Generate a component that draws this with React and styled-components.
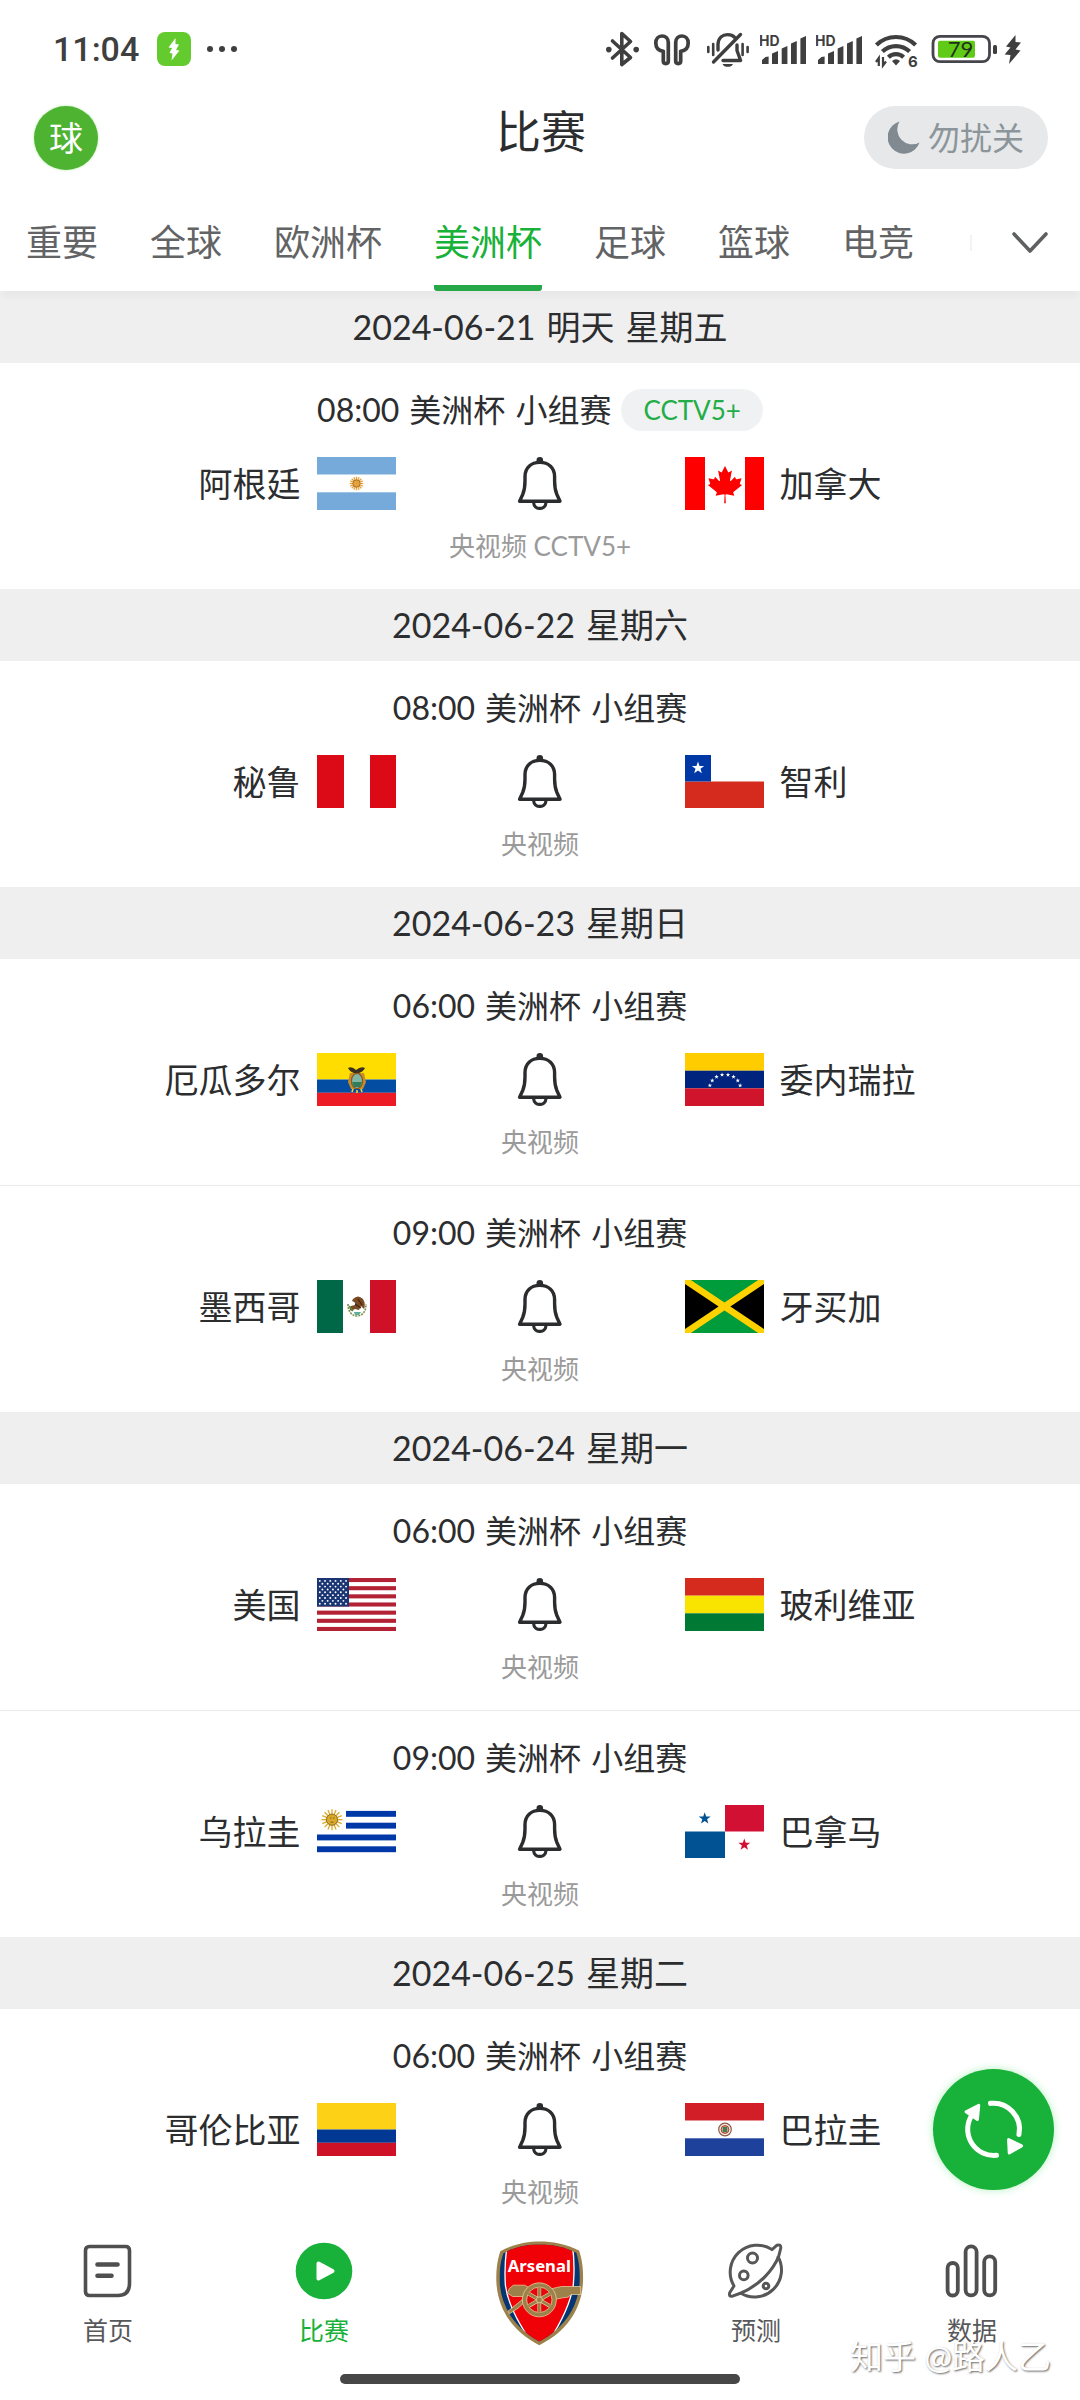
import React, { useState } from "react";
import styled, { createGlobalStyle, css } from "styled-components";

const GREEN = "#18b139";

const days = [
  {
    date: "2024-06-21",
    note: "明天",
    weekday: "星期五",
    matches: [
      { time: "08:00", tag: "CCTV5+", home: "阿根廷", homeFlag: "ar", away: "加拿大", awayFlag: "ca", live: "央视频 CCTV5+" },
    ],
  },
  {
    date: "2024-06-22",
    weekday: "星期六",
    matches: [
      { time: "08:00", home: "秘鲁", homeFlag: "pe", away: "智利", awayFlag: "cl", live: "央视频" },
    ],
  },
  {
    date: "2024-06-23",
    weekday: "星期日",
    matches: [
      { time: "06:00", home: "厄瓜多尔", homeFlag: "ec", away: "委内瑞拉", awayFlag: "ve", live: "央视频" },
      { time: "09:00", home: "墨西哥", homeFlag: "mx", away: "牙买加", awayFlag: "jm", live: "央视频" },
    ],
  },
  {
    date: "2024-06-24",
    weekday: "星期一",
    matches: [
      { time: "06:00", home: "美国", homeFlag: "us", away: "玻利维亚", awayFlag: "bo", live: "央视频" },
      { time: "09:00", home: "乌拉圭", homeFlag: "uy", away: "巴拿马", awayFlag: "pa", live: "央视频" },
    ],
  },
  {
    date: "2024-06-25",
    weekday: "星期二",
    matches: [
      { time: "06:00", home: "哥伦比亚", homeFlag: "co", away: "巴拉圭", awayFlag: "py", live: "央视频" },
    ],
  },
];

const tabs = ["重要", "全球", "欧洲杯", "美洲杯", "足球", "篮球", "电竞"];

const star = (cx, cy, r) =>
  Array.from({ length: 10 }, (_, i) => {
    const a = (Math.PI / 5) * i - Math.PI / 2;
    const d = i % 2 ? r * 0.4 : r;
    return `${cx + d * Math.cos(a)},${cy + d * Math.sin(a)}`;
  }).join(" ");

const Stripes = ({ rows }) => {
  let y = 0;
  return rows.map(([fill, height], i) => {
    const top = y;
    y += height;
    return <rect key={i} y={top} width="79" height={height} fill={fill} />;
  });
};

const Sun = ({ cx, cy, r, rays, fill, stroke }) => (
  <g>
    {Array.from({ length: 16 }, (_, i) => {
      const a = (Math.PI / 8) * i;
      return (
        <line
          key={i}
          x1={cx}
          y1={cy}
          x2={cx + rays * Math.cos(a)}
          y2={cy + rays * Math.sin(a)}
          stroke={fill}
          strokeWidth="1.3"
        />
      );
    })}
    <circle cx={cx} cy={cy} r={r} fill={fill} stroke={stroke} strokeWidth="0.8" />
  </g>
);

const flags = {
  ar: (
    <>
      <Stripes rows={[["#75aadb", 17.7], ["#fff", 17.6], ["#75aadb", 17.7]]} />
      <Sun cx={39.5} cy={26.5} r={3.6} rays={6.8} fill="#e3a33c" stroke="#a5652a" />
    </>
  ),
  ca: (
    <>
      <rect width="79" height="53" fill="#fff" />
      <rect width="20" height="53" fill="#f00" />
      <rect x="60" width="19" height="53" fill="#f00" />
      <path
        transform="translate(40 27.5) scale(.0092)"
        fill="#f00"
        d="m-90 2030 45-863a95 95 0 0 0-111-98l-859 151 116-320a65 65 0 0 0-20-73l-941-762 212-99a65 65 0 0 0 34-79l-186-572 542 115a65 65 0 0 0 73-38l105-247 423 454a65 65 0 0 0 111-57l-204-1052 327 189a65 65 0 0 0 91-27l332-652 332 652a65 65 0 0 0 91 27l327-189-204 1052a65 65 0 0 0 111 57l423-454 105 247a65 65 0 0 0 73 38l542-115-186 572a65 65 0 0 0 34 79l212 99-941 762a65 65 0 0 0-20 73l116 320-859-151a95 95 0 0 0-111 98l45 863z"
      />
    </>
  ),
  pe: (
    <>
      <rect width="79" height="53" fill="#fff" />
      <rect width="27" height="53" fill="#db0a16" />
      <rect x="53" width="26" height="53" fill="#db0a16" />
    </>
  ),
  cl: (
    <>
      <Stripes rows={[["#fff", 26.5], ["#d52b1e", 26.5]]} />
      <rect width="26" height="26.5" fill="#0039a6" />
      <polygon points={star(13, 13, 6.5)} fill="#fff" />
    </>
  ),
  ec: (
    <>
      <Stripes rows={[["#ffdd00", 26.5], ["#034ea2", 13.3], ["#ed1c24", 13.2]]} />
      <path d="M31 15q4-2 8 2q5-4 9-2q-2 4-6 5v3h-5v-3q-4-1-6-5z" fill="#3b2f20" />
      <path d="M33 20l-2 9 3 7h12l3-7-2-9z" fill="#c98b2b" />
      <ellipse cx="40" cy="28" rx="5.6" ry="7.6" fill="#7fb6a4" stroke="#8a5a1c" strokeWidth="1.2" />
      <path d="M35 29h10l-2 5h-6z" fill="#2f7d5a" />
      <path d="M36 36l-1 3M44 36l1 3M40 37v3" stroke="#f3d23a" strokeWidth="1.6" />
    </>
  ),
  ve: (
    <>
      <Stripes rows={[["#ffcc00", 17.7], ["#00247d", 17.6], ["#cf142b", 17.7]]} />
      {[0, 1, 2, 3, 4, 5, 6, 7].map((i) => {
        const a = Math.PI * (1.07 + i * 0.123);
        return (
          <polygon
            key={i}
            points={star(40 + 15.5 * Math.cos(a), 35.5 + 14 * Math.sin(a), 2.3)}
            fill="#fff"
          />
        );
      })}
    </>
  ),
  mx: (
    <>
      <rect width="79" height="53" fill="#fff" />
      <rect width="26" height="53" fill="#006847" />
      <rect x="53" width="26" height="53" fill="#ce1126" />
      <path d="M31 24q0 11 9 12q9-1 9-12" fill="none" stroke="#7d8f4d" strokeWidth="1.6" strokeDasharray="2 1" />
      <path d="M36 19q5-5 10 0q3 5 1 10l-3-3-2 4-4-1-4 2q-3-3 0-5l4-1q1-3-3-4z" fill="#7a4a25" />
      <path d="M41 19l4 6M38 24l6 4" stroke="#3d2613" strokeWidth="1.2" />
      <path d="M37 32h7l-2 3h-4z" fill="#5fae9c" />
      <path d="M32 26l4 5" stroke="#4f8a3c" strokeWidth="1.3" />
    </>
  ),
  jm: (
    <>
      <rect width="79" height="53" fill="#009b3a" />
      <path d="M0 0L39.5 26.5L0 53zM79 0L39.5 26.5L79 53z" fill="#000" />
      <path d="M0 0L79 53M79 0L0 53" stroke="#fed100" strokeWidth="6.5" />
    </>
  ),
  us: (
    <>
      <rect width="79" height="53" fill="#fff" />
      {[0, 1, 2, 3, 4, 5, 6].map((i) => (
        <rect key={i} y={(i * 106) / 13} width="79" height={53 / 13} fill="#b22234" />
      ))}
      <rect width="32" height="28.5" fill="#1a3573" />
      {Array.from({ length: 9 }, (_, r) =>
        Array.from({ length: r % 2 ? 5 : 6 }, (_, c) => (
          <circle
            key={`${r}-${c}`}
            cx={(r % 2 ? 5.4 : 2.8) + c * 5.25}
            cy={2.9 + r * 2.85}
            r="0.95"
            fill="#fff"
          />
        ))
      )}
    </>
  ),
  bo: <Stripes rows={[["#d52b1e", 17.7], ["#f9e300", 17.6], ["#007934", 17.7]]} />,
  uy: (
    <>
      <rect width="79" height="53" fill="#fff" />
      {[0, 1, 2, 3].map((i) => (
        <rect
          key={i}
          x={i < 2 ? 29 : 0}
          y={5.9 + i * 11.8}
          width={i < 2 ? 50 : 79}
          height="5.9"
          fill="#0038a8"
        />
      ))}
      <Sun cx={15} cy={14.7} r={5.6} rays={10.5} fill="#d9a92b" stroke="#7b5a12" />
      <path d="M13 13h1.5M16 13h1.5M13.5 17.2h3" stroke="#7b5a12" strokeWidth="0.9" />
    </>
  ),
  pa: (
    <>
      <rect width="79" height="53" fill="#fff" />
      <rect x="40" width="39" height="26.5" fill="#d21034" />
      <rect y="26.5" width="40" height="26.5" fill="#005293" />
      <polygon points={star(19.7, 13.5, 6.3)} fill="#005293" />
      <polygon points={star(59.3, 39.7, 6.3)} fill="#d21034" />
    </>
  ),
  co: <Stripes rows={[["#fcd116", 26.5], ["#003893", 13.3], ["#ce1126", 13.2]]} />,
  py: (
    <>
      <Stripes rows={[["#d21e26", 17.7], ["#fff", 17.6], ["#1e419b", 17.7]]} />
      <circle cx="40" cy="26.5" r="6.3" fill="#f4efe6" stroke="#8c5a4a" strokeWidth="1.2" />
      <circle cx="40" cy="26.5" r="3.9" fill="#c9a77a" stroke="#b5382f" strokeWidth="1" />
      <path d="M38 24v5h4v-5z" fill="#3f7f5c" />
    </>
  ),
};

const BluetoothIcon = () => (
  <svg width="36" height="40" viewBox="0 0 36 40">
    <path
      d="M7.5 12L25.5 28.5L16.8 35.5V4.5L25.5 12.5L7.5 29"
      fill="none"
      stroke="#3f3f3f"
      strokeWidth="3.6"
      strokeLinecap="round"
      strokeLinejoin="round"
    />
    <circle cx="3.8" cy="20.6" r="2.8" fill="#3f3f3f" />
    <circle cx="31.2" cy="20.6" r="2.8" fill="#3f3f3f" />
  </svg>
);

const EarbudsIcon = () => (
  <svg width="45" height="40" viewBox="0 0 45 40" fill="none" stroke="#3f3f3f" strokeWidth="3.7" strokeLinejoin="round">
    <path d="M12.3 22.3C7 21.6 4.8 18 4.8 14C4.8 10 7.4 7 11 7C14.6 7 17.3 9.6 17.3 13.5V32C17.3 35.4 12.3 35.4 12.3 32Z" />
    <path d="M29.7 22.3C35 21.6 37.2 18 37.2 14C37.2 10 34.6 7 31 7C27.4 7 24.7 9.6 24.7 13.5V32C24.7 35.4 29.7 35.4 29.7 32Z" />
  </svg>
);

const MutedIcon = () => (
  <svg width="44" height="40" viewBox="0 0 44 40" fill="none" stroke="#3f3f3f" strokeWidth="3.4" strokeLinecap="round" strokeLinejoin="round">
    <path d="M12 21V15C12.5 9 16.5 5.6 21.5 5.6C24.5 5.6 27 6.5 28.6 8.3" />
    <path d="M31 16V21.5L34.6 31.5H17" />
    <path d="M7.5 33L34.5 5.5" />
    <path d="M16.5 35H27C25.5 38.8 18 38.8 16.5 35Z" fill="#3f3f3f" stroke="none" />
    <path d="M2.3 18V23M7.2 15V26M36.6 15V26M41.6 18V23" strokeWidth="2.6" />
  </svg>
);

const SignalIcon = () => (
  <svg width="46" height="40" viewBox="0 0 46 40" fill="#3f3f3f">
    <text x="-1" y="16.6" fontFamily="Inter, sans-serif" fontSize="14" fontWeight="700">
      HD
    </text>
    <path d="M2 35V31L5.5 28L8.6 27.4V35Z" />
    <path d="M12 35V24.5L18 22V35Z" />
    <path d="M21.7 35V19.5L27.4 17V35Z" />
    <path d="M31 35V14.5L36.8 12V35Z" />
    <path d="M40.4 35V9.5L46 7V35Z" />
  </svg>
);

const WifiIcon = () => (
  <svg width="48" height="40" viewBox="0 0 48 40" fill="none" stroke="#3f3f3f" strokeWidth="4.2">
    <path d="M4.4 16A28 28 0 0 1 43.6 16" />
    <path d="M10.4 22.6A19.5 19.5 0 0 1 37.6 22.6" />
    <path d="M16.4 28.2A11 11 0 0 1 31.6 28.2" />
    <path d="M20 32Q24 28.6 28 32L24 36.5Z" fill="#3f3f3f" stroke="none" />
    <path d="M6.8 37V29L4 33M11 28V36.5L14 32.5" strokeWidth="2.2" />
    <text x="36" y="37.5" fill="#3f3f3f" stroke="none" fontFamily="Inter, sans-serif" fontSize="15" fontWeight="700">
      6
    </text>
  </svg>
);

const BatteryIcon = () => (
  <svg width="92" height="40" viewBox="0 0 92 40">
    <rect x="3" y="7.3" width="56.5" height="25.4" rx="7" fill="#fff" stroke="#45454b" strokeWidth="2.8" />
    <rect x="8" y="11.7" width="37" height="17" rx="2" fill="#60cb16" />
    <text x="30.5" y="27.8" textAnchor="middle" fontFamily="Lato, sans-serif" fontSize="22" fill="#22301a">
      79
    </text>
    <rect x="63" y="16" width="4" height="9" rx="1.5" fill="#3f3f3f" />
    <path d="M85.5 6L76 17.5L80.5 18.5L74.6 25.5L80.5 26L79 35L90.5 21.5L85.5 20.5L91 13.6L85.5 13Z" fill="#3f3f3f" />
  </svg>
);

const MoonIcon = () => (
  <svg width="32" height="33" viewBox="0 0 32 33">
    <path d="M11.5 .5A16.4 16.4 0 1 0 31.5 21.5A15 15 0 0 1 11.5 .5Z" fill="#808a90" />
  </svg>
);

const BellIcon = () => (
  <svg width="46" height="53" viewBox="0 0 46 53" fill="none" stroke="#2b2c2e" strokeWidth="3.4" strokeLinejoin="round">
    <circle cx="22.8" cy="3.4" r="3.3" fill="#2b2c2e" stroke="none" />
    <path d="M2.6 44.2L5.7 37.5C7.4 33.5 8 29 8 24V19.5C8 10.8 14 5.4 22.8 5.4C31.6 5.4 37.6 10.8 37.6 19.5V24C37.6 29 38.2 33.5 39.9 37.5L43 44.2Z" />
    <path d="M16.6 45.5C17 53.4 28.6 53.4 29 45.5" strokeWidth="3.2" />
  </svg>
);

const RefreshIcon = () => (
  <svg width="65" height="65" viewBox="108 112 194 194" fill="none" stroke="#fff" strokeLinecap="round" strokeLinejoin="round">
    <path d="M196 131A78 78 0 0 1 281 224" strokeWidth="15" />
    <path d="M214 286A78 78 0 0 1 137 172" strokeWidth="15" />
    <path d="M250 239L289 258L252 279Z" fill="#fff" strokeWidth="9" />
    <path d="M123 156L161 137L157 179Z" fill="#fff" strokeWidth="9" />
  </svg>
);

const HomeIcon = () => (
  <svg width="58" height="58" viewBox="0 0 58 58" fill="none" stroke="#4f4f4f" strokeWidth="3.6" strokeLinecap="round">
    <path d="M10.5 4.5H46.5Q50.5 4.5 50.5 8.5V41Q50.5 53.5 39 53.5H10.5Q6.5 53.5 6.5 49.5V8.5Q6.5 4.5 10.5 4.5Z" />
    <path d="M18.5 22.5H38.5M18.5 33.8H32.5" strokeWidth="4.6" />
  </svg>
);

const PlayIcon = () => (
  <svg width="58" height="58" viewBox="0 0 58 58">
    <circle cx="29" cy="29" r="28.3" fill={GREEN} />
    <path d="M23.5 21.5L37.5 29L23.5 36.5Z" fill="#fff" stroke="#fff" strokeWidth="4" strokeLinejoin="round" />
  </svg>
);

const PlanetIcon = () => (
  <svg width="58" height="58" viewBox="0 0 58 58" fill="none" stroke="#575757" strokeWidth="3" strokeLinejoin="round">
    <path d="M45 7.6A27 27 0 0 0 7 44L2.8 50.5Q1.4 55.5 6.2 53.8L14 51C33 43 46 28 51.6 14.6L53.8 6Q54 2 50 3.2Z" />
    <path d="M50.6 14A27 27 0 0 1 13.4 51" />
    <circle cx="25.5" cy="16" r="5" />
    <circle cx="16.8" cy="33.4" r="4.3" />
    <circle cx="39" cy="44" r="2.8" />
  </svg>
);

const ChartIcon = () => (
  <svg width="58" height="58" viewBox="0 0 58 58" fill="none" stroke="#4f4f4f" strokeWidth="3.8">
    <rect x="4.6" y="21" width="10.2" height="32.5" rx="5" />
    <rect x="22.6" y="4.4" width="11" height="49" rx="5.4" />
    <rect x="41.2" y="14.4" width="11" height="39" rx="5.4" />
  </svg>
);

const Crest = () => (
  <svg width="88" height="105" viewBox="36 30 264 314">
    <defs>
      <clipPath id="crest-field">
        <path d="M58 66C95 47 130 40 167 40C204 40 240 47 277 65C285 90 288 115 287 150C284 225 243 290 166 331C91 290 50 225 47 150C46 115 50 90 58 66Z" />
      </clipPath>
    </defs>
    <path
      d="M49 60C90 38 130 31 167 31C204 31 245 38 285 58C294 85 298 110 297 150C294 232 250 300 166 342C84 300 40 232 37 150C36 110 41 85 49 60Z"
      fill="#9c824a"
    />
    <g clipPath="url(#crest-field)">
      <rect x="36" y="30" width="264" height="314" fill="#063672" />
      <path d="M72 30H263Q274 90 268 160Q258 235 186 344H150Q72 235 64 160Q60 90 72 30Z" fill="#ef0107" stroke="#fff" strokeWidth="4" />
    </g>
    <g fill="#9c824a" stroke="#f1dfb0" strokeWidth="2">
      <path d="M88 162H122L140 172H205L232 166H290V190H262L252 198L236 200L206 206H140L118 196H86L70 186L76 172Z" />
      <path d="M130 204L104 230L76 248L72 240L126 196Z" />
      <circle cx="166" cy="206" r="51" />
    </g>
    <circle cx="166" cy="206" r="38" fill="#e5060b" stroke="#f1dfb0" strokeWidth="2" />
    <g stroke="#f1dfb0" strokeWidth="11">
      <path d="M166 170V242M135 188L197 224M135 224L197 188" />
    </g>
    <g stroke="#9c824a" strokeWidth="8">
      <path d="M166 168V244M133 187L199 225M133 225L199 187" />
    </g>
    <circle cx="166" cy="206" r="9" fill="#9c824a" stroke="#f1dfb0" strokeWidth="2" />
    <text
      x="166"
      y="122"
      textAnchor="middle"
      fill="#fff"
      fontFamily="Noto Sans, sans-serif"
      fontSize="50"
      fontWeight="700"
    >
      Arsenal
    </text>
  </svg>
);

const navItems = [
  { label: "首页", icon: <HomeIcon /> },
  { label: "比赛", icon: <PlayIcon />, active: true },
  { icon: <Crest />, name: "Arsenal" },
  { label: "预测", icon: <PlanetIcon /> },
  { label: "数据", icon: <ChartIcon /> },
];

const Match = ({ match }) => (
  <MatchItem>
    <MatchTitle>
      <time>{match.time}</time>
      <span>美洲杯</span>
      <span>小组赛</span>
      {match.tag && <Tag>{match.tag}</Tag>}
    </MatchTitle>
    <Teams>
      <Team $home>
        <Flag viewBox="0 0 79 53" aria-hidden="true">{flags[match.homeFlag]}</Flag>
        <span>{match.home}</span>
      </Team>
      <BellButton type="button" aria-label="提醒">
        <BellIcon />
      </BellButton>
      <Team>
        <Flag viewBox="0 0 79 53" aria-hidden="true">{flags[match.awayFlag]}</Flag>
        <span>{match.away}</span>
      </Team>
    </Teams>
    <Live>{match.live}</Live>
  </MatchItem>
);

const App = () => {
  const [current, setCurrent] = useState("美洲杯");

  return (
    <Page>
      <GlobalStyle />
      <StatusBar>
        <Clock>11:04</Clock>
        <AppBadge>
          <svg width="34" height="34" viewBox="0 0 34 34">
            <path d="M18.5 6L11.5 15.5L15 16L12.5 21L15.5 21.5L14.5 28.5L22.5 18.5L19 18L22 12.5L18.5 12Z" fill="#fff" />
          </svg>
        </AppBadge>
        <svg width="32" height="8" viewBox="0 0 32 8" fill="#3f3f3f">
          <circle cx="4" cy="4" r="3" />
          <circle cx="16" cy="4" r="3" />
          <circle cx="28" cy="4" r="3" />
        </svg>
        <StatusIcons>
          <BluetoothIcon />
          <EarbudsIcon />
          <MutedIcon />
          <SignalIcon />
          <SignalIcon />
          <WifiIcon />
          <BatteryIcon />
        </StatusIcons>
      </StatusBar>

      <Header>
        <Avatar type="button">球</Avatar>
        <Title>比赛</Title>
        <Quiet type="button">
          <MoonIcon />
          勿扰关
        </Quiet>
      </Header>

      <TabBar>
        <TabList>
          {tabs.map((tab) => (
            <Tab
              key={tab}
              type="button"
              $active={tab === current}
              onClick={() => setCurrent(tab)}
            >
              <span>{tab}</span>
            </Tab>
          ))}
        </TabList>
        <More type="button" aria-label="更多">
          <svg width="38" height="24" viewBox="0 0 38 24">
            <path d="M3 3L19 20L35 3" fill="none" stroke="#5f6062" strokeWidth="3.6" strokeLinecap="round" strokeLinejoin="round" />
          </svg>
        </More>
      </TabBar>

      <Main>
        {days.map((day) => (
          <section key={day.date}>
            <DateHeader>
              <time>{day.date}</time>
              {day.note && <span>{day.note}</span>}
              <span>{day.weekday}</span>
            </DateHeader>
            <MatchList>
              {day.matches.map((match) => (
                <Match key={match.time} match={match} />
              ))}
            </MatchList>
          </section>
        ))}
      </Main>

      <Bottom>
        <Nav>
          {navItems.map((item) => (
            <NavLink
              key={item.label || item.name}
              href="#"
              aria-label={item.name}
              $active={item.active}
            >
              {item.icon}
              {item.label && <span>{item.label}</span>}
            </NavLink>
          ))}
        </Nav>
        <HomeIndicator />
        <Watermark>知乎 @路人乙</Watermark>
      </Bottom>

      <Refresh type="button" aria-label="刷新">
        <RefreshIcon />
      </Refresh>
    </Page>
  );
};

export default App;

const GlobalStyle = createGlobalStyle`
  * {
    box-sizing: border-box;
  }

  body {
    margin: 0;
    background: #fff;
    color: #2c2d2f;
    font-family: Lato, "Noto Sans CJK SC", sans-serif;
  }

  button {
    padding: 0;
    border: none;
    background: none;
    font-family: inherit;
    cursor: pointer;
  }

  svg {
    display: block;
    flex-shrink: 0;
  }
`;

const Page = styled.div`
  min-height: 100vh;
  display: flex;
  flex-direction: column;
`;

const StatusBar = styled.div`
  height: 98px;
  padding: 0 58px 0 53px;
  display: flex;
  align-items: center;
`;

const Clock = styled.span`
  margin-right: 18px;
  font-family: Roboto, sans-serif;
  font-size: 34px;
  font-weight: 500;
  line-height: 40px;
  color: #3f3f3f;
`;

const AppBadge = styled.span`
  margin-right: 15px;
  border-radius: 8px;
  background: #63cb2d;
`;

const StatusIcons = styled.div`
  margin-left: auto;
  display: flex;
  align-items: center;
  gap: 10px;
`;

const Header = styled.header`
  height: 82px;
  padding: 8px 32px 0 34px;
  display: grid;
  grid-template-columns: 1fr auto 1fr;
  align-items: start;
`;

const Avatar = styled.button`
  width: 64px;
  height: 64px;
  border-radius: 50%;
  background: #4db331;
  box-shadow: 0 0 3px #b9ecb0;
  color: #fff;
  font-size: 34px;
  line-height: 64px;
`;

const Title = styled.h1`
  margin: 0;
  font-size: 45px;
  font-weight: 400;
  line-height: 52px;
`;

const Quiet = styled.button`
  justify-self: end;
  height: 63px;
  padding: 0 24px;
  display: flex;
  align-items: center;
  gap: 8px;
  border-radius: 32px;
  background: #e6e8e9;
  color: #8b959a;
  font-size: 32px;
  line-height: 40px;
`;

const TabBar = styled.nav`
  position: relative;
  z-index: 1;
  height: 111px;
  display: flex;
  justify-content: space-between;
  background: #fff;
  box-shadow: 0 8px 6px -2px rgba(0, 0, 0, 0.03);
`;

const TabList = styled.div`
  display: flex;
  overflow: hidden;
`;

const Tab = styled.button`
  padding: 40px 26px 0;
  font-size: 36px;
  line-height: 44px;
  white-space: nowrap;
  color: #626365;

  span {
    height: 71px;
    display: block;
  }

  ${({ $active }) =>
    $active &&
    css`
      color: ${GREEN};

      span {
        background: linear-gradient(#24a848, #24a848) bottom / 100% 6px no-repeat;
        border-radius: 3px;
      }
    `}
`;

const More = styled.button`
  width: 110px;
  padding: 15px 31px 0 0;
  display: flex;
  align-items: center;
  justify-content: space-between;

  &::before {
    content: "";
    width: 2px;
    height: 16px;
    background: #f3f3f3;
  }
`;

const Main = styled.main`
  flex: 1;
`;

const DateHeader = styled.h2`
  height: 72px;
  margin: 0;
  display: flex;
  justify-content: center;
  gap: 11px;
  background: #efefef;
  font-size: 34px;
  font-weight: 400;
  line-height: 72px;
`;

const MatchList = styled.ul`
  margin: 0;
  padding: 0;
  list-style: none;
`;

const MatchItem = styled.li`
  padding: 26px 0 28px;

  & + & {
    border-top: 1px solid #ebebeb;
  }
`;

const MatchTitle = styled.div`
  height: 42px;
  display: flex;
  align-items: center;
  justify-content: center;
  gap: 10px;
  font-size: 32px;
  line-height: 42px;
`;

const Tag = styled.span`
  padding: 0 22px;
  border-radius: 21px;
  background: #eff1f2;
  color: #22ad47;
  font-size: 26px;
`;

const Teams = styled.div`
  margin-top: 26px;
  display: grid;
  grid-template-columns: 1fr 289px 1fr;
  align-items: center;
`;

const Team = styled.div`
  display: flex;
  flex-direction: ${({ $home }) => ($home ? "row-reverse" : "row")};
  align-items: center;
  gap: 16px;
  font-size: 34px;
  line-height: 50px;
`;

const Flag = styled.svg`
  width: 79px;
  height: 53px;
`;

const BellButton = styled.button`
  justify-self: center;
`;

const Live = styled.p`
  margin: 21px 0 0;
  font-size: 26px;
  line-height: 30px;
  text-align: center;
  color: #9a9a9a;
`;

const Bottom = styled.footer`
  position: relative;
  padding: 6px 0 16px;
  background: #fff;
`;

const Nav = styled.nav`
  height: 105px;
  display: grid;
  grid-template-columns: repeat(5, 1fr);
  align-items: center;
`;

const NavLink = styled.a`
  display: flex;
  flex-direction: column;
  align-items: center;
  gap: 15px;
  font-size: 25px;
  line-height: 30px;
  text-decoration: none;
  color: ${({ $active }) => ($active ? GREEN : "#58595b")};
`;

const HomeIndicator = styled.div`
  width: 37%;
  height: 10px;
  margin: 28px auto 0;
  border-radius: 5px;
  background: #474747;
`;

const Watermark = styled.span`
  position: absolute;
  right: 29px;
  bottom: 22px;
  color: #fff;
  font-size: 33px;
  line-height: 44px;
  text-shadow: 1px 1px 2px #666;
`;

const Refresh = styled.button`
  position: fixed;
  right: 26px;
  bottom: 210px;
  width: 121px;
  height: 121px;
  display: flex;
  align-items: center;
  justify-content: center;
  border-radius: 50%;
  background: ${GREEN};
  box-shadow: 0 0 8px #b5f0c0;
`;
